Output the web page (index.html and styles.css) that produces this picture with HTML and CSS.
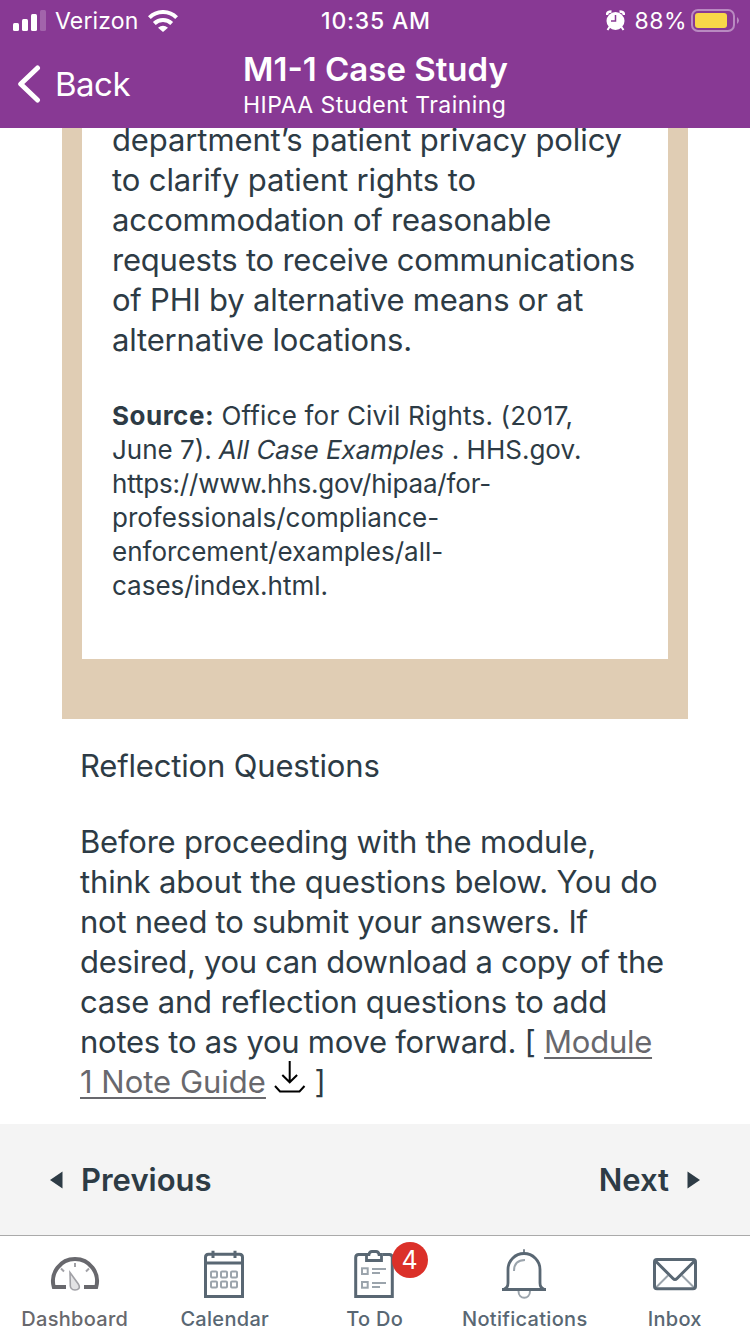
FILE: index.html
```html
<!DOCTYPE html>
<html lang="en">
<head>
<meta charset="utf-8">
<title>M1-1 Case Study</title>
<link rel="stylesheet" href="styles.css">
</head>
<body>
<div class="app">
  <header class="header">
    <div class="status">
      <div class="status-left">
        <svg class="signal" width="34" height="22" viewBox="0 0 34 22" fill="#fff"><rect x="0" y="13" width="6" height="8" rx="1.5"/><rect x="9" y="9" width="6" height="12" rx="1.5"/><rect x="18" y="4" width="6" height="17" rx="1.5"/><rect x="27" y="0" width="6" height="21" rx="1.5" opacity=".22"/></svg>
        <span class="carrier">Verizon</span>
        <svg class="wifi" width="30" height="22" viewBox="0 0 30 22" fill="none" stroke="#fff" stroke-width="4"><path d="M1.400 7.600a19.300 19.300 0 0 1 27.200 0"/><path d="M6.300 13.500a12.400 12.400 0 0 1 17.400 0"/><path d="M10 17.800q5-4.200 10 0l-5 4.200z" fill="#fff" stroke="none"/></svg>
      </div>
      <span class="clock">10:35 AM</span>
      <div class="status-right">
        <svg class="alarm" width="19" height="21" viewBox="0 0 19 21"><circle cx="9.500" cy="11" r="9" fill="#fff"/><path d="M1 5Q1 1.500 5.500 1.500M18 5Q18 1.500 13.500 1.500" fill="none" stroke="#fff" stroke-width="2.600"/><path d="M3.500 17l-2 3M15.500 17l2 3" stroke="#fff" stroke-width="2"/><path d="M9.500 5v6H5" fill="none" stroke="#883994" stroke-width="1.500"/></svg>
        <span class="percent">88%</span>
        <svg class="battery" width="48" height="24" viewBox="0 0 48 24"><rect x="1" y="1" width="42" height="21" rx="6" fill="none" stroke="#b98ac1" stroke-width="2"/><rect x="4" y="4" width="32" height="15" rx="3" fill="#f8d748"/><path d="M46 8q4 3.500 0 7z" fill="#b98ac1"/></svg>
      </div>
    </div>
    <div class="bar">
      <div class="back">
        <svg width="24" height="40" viewBox="0 0 24 40" fill="none" stroke="#fff" stroke-width="5" stroke-linecap="round" stroke-linejoin="round"><path d="M20.500 4L3.700 20l16.800 16"/></svg>
        <span>Back</span>
      </div>
      <div class="titles">
        <h1>M1-1 Case Study</h1>
        <p>HIPAA Student Training</p>
      </div>
    </div>
  </header>
  <main class="content">
    <section class="frame">
      <div class="card">
        <p class="body-text"><span class="t1">department’s patient privacy policy</span><br><span class="t1">to clarify patient rights to</span><br><span class="t3">accommodation of reasonable</span><br><span class="t3">requests to receive communications</span><br><span class="t3">of PHI by alternative means or at</span><br><span class="t2">alternative locations.</span></p>
        <p class="source"><b>Source:</b> <span class="w2">Office for Civil Rights. (2017,</span><br>June 7). <i>All Case Examples</i> . HHS.gov.<br><span class="t2">https://www.hhs.gov/hipaa/for-</span><br>professionals/compliance-<br>enforcement/examples/all-<br>cases/index.html.</p>
      </div>
    </section>
    <section class="reflection">
      <p class="body-text"><span class="t2">Reflection Questions</span></p>
      <p class="body-text"><span class="t3">Before proceeding with the module,</span><br><span class="t2">think about the questions below. You do</span><br><span class="t4">not need to submit your answers. If</span><br><span class="t5">desired, you can download a copy of the</span><br><span class="t2">case and reflection questions to add</span><br><span class="t4">notes to as you move forward. [ <a>Module</a></span><br><a>1 Note Guide</a> <svg class="download" width="32" height="34" viewBox="0 0 32 34" fill="none" stroke="#000" stroke-width="2"><path d="M15.700 1v21M8.300 15l7.400 7.300 7.400-7.300M1 26l5 5.500h19.500l5-5.500"/></svg> ]</p>
    </section>
  </main>
  <nav class="pager">
    <span class="page-link"><svg width="13" height="18" viewBox="0 0 13 18"><path d="M0 9L12.500.5v17z" fill="#2d3b45"/></svg><span>Previous</span></span>
    <span class="page-link"><span>Next</span><svg width="13" height="18" viewBox="0 0 13 18"><path d="M13 9L.5.5v17z" fill="#2d3b45"/></svg></span>
  </nav>
  <footer class="tabs">
    <div class="tab active">
      <svg width="50" height="52" viewBox="0 0 50 52" fill="none"><path d="M16 39H3.800A22 22 0 1 1 46.200 39H34" stroke="#68686d" stroke-width="4"/><path d="M25 15v4M11 20.500l3 3M39 20.500l-3 3" stroke="#a1a1a6" stroke-width="2"/><path d="M20 24.500l8.300 11.500c2.500 4 0 6-3.300 6-3.500 0-5-2.500-4.700-5.500z" fill="#e3e3e5" stroke="#a1a1a6" stroke-width="1.600"/></svg>
      <span>Dashboard</span>
    </div>
    <div class="tab">
      <svg width="50" height="52" viewBox="0 0 50 52" fill="none" stroke="#596773" stroke-width="3"><path d="M5.500 48.500V9.200q0-3 3-3h31q3 0 3 3v39.300zM5 15h38"/><path d="M13 2.700v7.300M35 2.700v7.300" stroke-width="3"/><g stroke="#9ba4ac" stroke-width="2"><rect x="11" y="23.500" width="6" height="6" rx="1"/><rect x="21" y="23.500" width="6" height="6" rx="1"/><rect x="31" y="23.500" width="6" height="6" rx="1"/><rect x="11" y="33.500" width="6" height="6" rx="1"/><rect x="21" y="33.500" width="6" height="6" rx="1"/><rect x="31" y="33.500" width="6" height="6" rx="1"/></g></svg>
      <span>Calendar</span>
    </div>
    <div class="tab">
      <svg width="50" height="52" viewBox="0 0 50 52" fill="none" stroke="#596773" stroke-width="3"><path d="M16 6.500H8.700q-3 0-3 3v39h36.600v-39q0-3-3-3H33"/><path d="M16.500 12.500v-6H19q.5-3 3-3h4q2.500 0 3 3h2.500v6z" stroke-width="2.800"/><g stroke="#9ba4ac" stroke-width="2"><rect x="12" y="20.300" width="5.700" height="5.700"/><rect x="12" y="34" width="5.700" height="5.700"/><path d="M22 21h14M22 25h8M22 35h14M22 39h8"/></g></svg>
      <span>To Do</span>
      <b class="badge">4</b>
    </div>
    <div class="tab">
      <svg width="50" height="52" viewBox="0 0 50 52" fill="none" stroke="#596773" stroke-width="3"><path d="M24 1.300V5" stroke="#7c8791" stroke-width="2"/><path d="M18.500 43c0 9 11.500 9 11.500 0" stroke="#9ba4ac" stroke-width="2"/><path d="M14 23q0-11 11-11" stroke="#9ba4ac" stroke-width="2"/><path d="M2 41.600h44"/><path d="M4 41q4-1 4-6V21.500a16 16 0 0 1 32 0V35q0 5 4 6" stroke-width="2.800"/></svg>
      <span>Notifications</span>
    </div>
    <div class="tab">
      <svg width="50" height="52" viewBox="0 0 50 52" fill="none" stroke="#596773" stroke-width="3"><path d="M6 39.500L18 27.500M44 39.500L32 27.500" stroke="#9ba4ac" stroke-width="2"/><rect x="4.500" y="11.500" width="41" height="29.300" rx="2.500"/><path d="M5 12.500l18 18q2 2 4 0l18-18"/></svg>
      <span>Inbox</span>
    </div>
  </footer>
</div>
</body>
</html>
```

FILE: styles.css
```css
* { box-sizing: border-box; }
body { margin: 0; background: #fff; font-family: Inter, "Liberation Sans", sans-serif; color: #2d3b45; }
h1, p { margin: 0; }
svg { display: block; flex: none; }
.app { width: 750px; height: 1334px; display: flex; flex-direction: column; overflow: hidden; }
.header { height: 128px; flex: none; background: #883994; color: #fff; }
.status { display: grid; grid-template-columns: 1fr auto 1fr; height: 40px; align-items: center; padding: 1px 11px 0 13px; font-size: 23px; line-height: 40px; }
.status-left, .status-right { display: flex; align-items: center; }
.status-right { justify-content: flex-end; }
.signal { margin: -1px 8px 0 0; }
.carrier { width: 84px; letter-spacing: .15px; }
.wifi { margin: -1px 0 0 9px; }
.clock { font-weight: 500; letter-spacing: .8px; }
.percent { margin: 0 4px 0 9px; letter-spacing: .5px; }
.battery { margin-top: -1px; }
.alarm { margin-top: -2px; }
.bar { display: grid; grid-template-columns: 243px 264px 1fr; height: 88px; }
.back { display: flex; align-items: center; padding-left: 17px; gap: 14px; font-size: 33px; letter-spacing: -.5px; height: 88px; }
.titles { white-space: nowrap; padding-top: 9px; }
.titles h1 { font-size: 33px; line-height: 41px; font-weight: 600; }
.titles p { font-size: 23px; line-height: 30px; letter-spacing: .46px; }
.content { height: 996px; flex: none; overflow: hidden; }
.frame { width: 626px; height: 591px; margin: 0 auto; padding: 0 20px 60px; background: #e0cdb4; }
.card { height: 531px; background: #fff; padding-left: 30px; overflow: hidden; }
.body-text { font-size: 31px; line-height: 40px; white-space: nowrap; }
.card .body-text { margin-top: -8px; }
.t1 { letter-spacing: -.11px; }
.t2 { letter-spacing: -.17px; }
.t3 { letter-spacing: -.22px; }
.t4 { letter-spacing: -.26px; }
.t5 { letter-spacing: -.32px; }
.w2 { letter-spacing: .2px; }
.source { margin-top: 39px; font-size: 26px; line-height: 34px; white-space: nowrap; }
.source b { font-weight: 700; letter-spacing: .5px; }
.source i { display: inline-block; font-style: normal; transform: skewX(-10deg); letter-spacing: -.03px; }
.reflection { padding: 27px 0 0 80px; }
.reflection .body-text + .body-text { margin-top: 36px; }
.reflection a { color: #68686d; text-decoration: underline; text-decoration-thickness: 2px; text-underline-offset: 4px; }
.download { display: inline-block; vertical-align: -1px; margin: -10px 0 0 -1px; }
.pager { height: 111px; flex: none; display: flex; justify-content: space-between; align-items: center; padding: 0 50px; background: #f4f4f4; font-size: 31px; font-weight: 600; }
.page-link { display: flex; align-items: center; gap: 18px; }
.page-link span { padding-bottom: 1px; }
.tabs { height: 99px; flex: none; display: grid; grid-template-columns: repeat(5, 150px); border-top: 1px solid #aaa; color: #596773; }
.tab { position: relative; display: flex; flex-direction: column; align-items: center; padding-top: 12px; font-size: 20px; font-weight: 500; letter-spacing: .3px; line-height: 24px; }
.tab span { margin: 7px .5px 0 0; }
.active { color: #68686d; }
.badge { position: absolute; left: 92px; top: 6px; width: 36px; height: 36px; border-radius: 50%; background: #db3029; color: #fff; font-size: 25px; line-height: 36px; font-weight: 400; text-align: center; letter-spacing: 0; padding-right: 1px; }
```
